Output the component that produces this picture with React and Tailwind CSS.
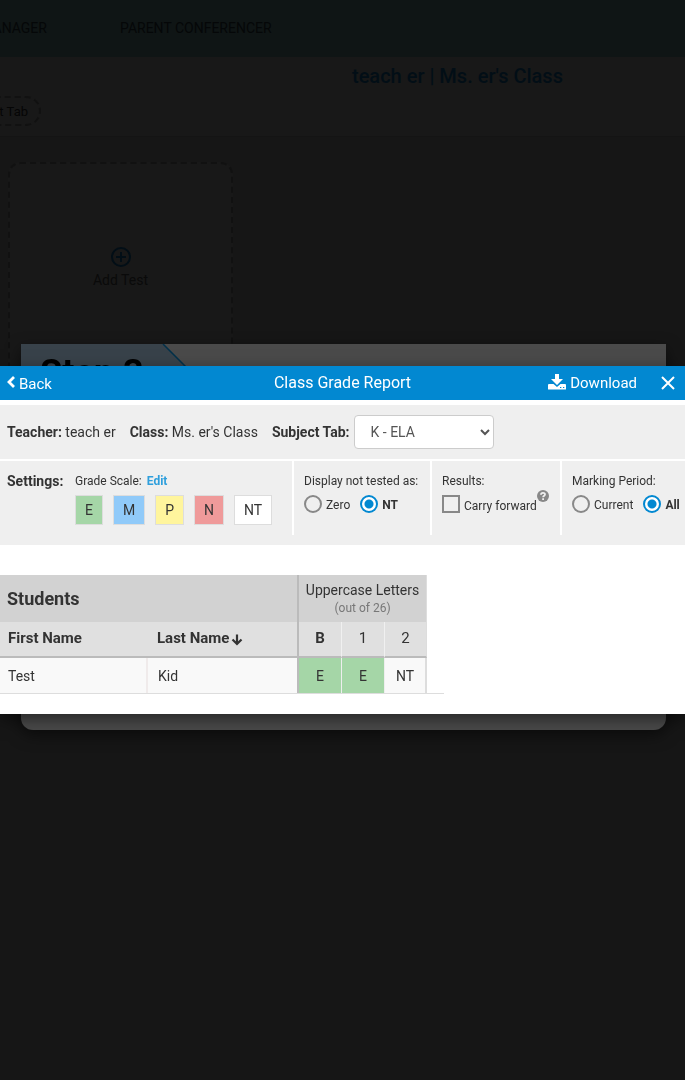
import React from "react";

const grades = [
  ["E", "bg-[#a5d6a7]"],
  ["M", "bg-[#90caf9]"],
  ["P", "bg-[#fff59d]"],
  ["N", "bg-[#ef9a9a]"],
  ["NT", "bg-white"],
];

function Radio({ name, label, checked }) {
  return (
    <label className="flex items-center gap-1">
      <input
        type="radio"
        name={name}
        defaultChecked={checked}
        className="peer size-[18px] shrink-0 appearance-none rounded-full border-2 border-[#888] bg-[#efefef] checked:border-[#0288d1] checked:bg-[radial-gradient(circle,#0288d1_4px,#fff_5px)]"
      />
      <span className="pt-0.5 peer-checked:font-bold">{label}</span>
    </label>
  );
}

function Backdrop() {
  return (
    <div className="min-h-screen bg-[#161616]">
      <nav className="h-[57px] overflow-hidden bg-[#0f1515] pt-[18px] text-sm leading-5 text-[#050708]">
        <div className="-ml-[56px] flex gap-[77px] whitespace-nowrap">
          <a href="#manager" className="w-[99px] text-right">TEST MANAGER</a>
          <a href="#conferencer">PARENT CONFERENCER</a>
        </div>
      </nav>
      <header className="h-20 overflow-hidden border-b border-[#141414] bg-[#181818] pt-[7px]">
        <h1 className="ml-[352px] text-xl leading-6 font-medium whitespace-nowrap text-[#020e16]">
          teach er | Ms. er's Class
        </h1>
        <button className="-ml-[100px] mt-2 flex h-[30px] w-[141px] items-center justify-end rounded-full border-2 border-dashed border-[#111] pt-0.5 pr-[11px] text-[13px] text-[#050505]">
          Add Subject Tab
        </button>
      </header>
      <main className="px-2 pt-[25px]">
        <button className="flex h-[236px] w-[225px] flex-col items-center justify-center gap-0.5 rounded-xl border-2 border-dashed border-[#111] bg-[#181818] pb-7 text-sm text-[#0a0a0a]">
          <svg width="22" height="22" viewBox="0 0 22 22" fill="none" stroke="#020e16" strokeWidth="2" className="mt-1">
            <circle cx="11" cy="11" r="9" />
            <path d="M11 6v10M6 11h10" />
          </svg>
          Add Test
        </button>
      </main>
    </div>
  );
}

function StepDialog() {
  return (
    <div className="fixed inset-0 flex items-center pr-[19px] pb-[6px] pl-[21px]">
      <section className="h-[386px] grow overflow-hidden rounded-b-xl bg-[#4a4a4a] shadow-[0_5px_15px_rgba(0,0,0,0.5)]">
        <div className="relative">
          <svg width="205" height="40" viewBox="0 0 205 40" className="block">
            <path d="M0 0H142L182 40H0Z" fill="#38424a" />
            <path d="M142 0L182 40" stroke="#02304a" strokeWidth="1.5" />
          </svg>
          <h2 className="absolute top-[9px] left-[19px] text-4xl font-bold text-black">Step 3</h2>
        </div>
      </section>
    </div>
  );
}

function TitleBar() {
  return (
    <header className="grid h-[34px] grid-cols-[1fr_auto_1fr] items-center bg-[#0288d1] text-white">
      <button className="flex items-center gap-1 pt-0.5 pl-[7px] text-[15px]">
        <svg width="8" height="12" viewBox="0 0 8 12" fill="none" stroke="currentColor" strokeWidth="2.8" className="mb-1">
          <path d="M7 1L2 6L7 11" />
        </svg>
        Back
      </button>
      <h2 className="text-base">Class Grade Report</h2>
      <div className="flex items-center justify-end gap-5 pr-[6px]">
        <button className="flex items-center gap-1 text-[15px]">
          <svg width="18" height="16" viewBox="0 0 18 16" className="mb-0.5" fill="currentColor">
            <path d="M7 0h4v5h4L9 11L3 5h4Z" />
            <path fillRule="evenodd" d="M1 10h4.500l3.500 3l3.500-3H17q1 0 1 1v4q0 .5-.5.5H.5Q0 15.500 0 15v-4q0-1 1-1ZM12 13v1h1.300v-1ZM15 13v1h1.300v-1Z" />
          </svg>
          Download
        </button>
        <button aria-label="Close" className="p-1">
          <svg width="14" height="14" viewBox="0 0 14 14" fill="none" stroke="currentColor" strokeWidth="2">
            <path d="M1 1L13 13M13 1L1 13" />
          </svg>
        </button>
      </div>
    </header>
  );
}

function Settings() {
  return (
    <div className="mt-0.5 flex h-[84px] bg-[#efefef] pb-[10px] text-xs whitespace-nowrap">
      <h3 className="w-[75px] shrink-0 pt-[10px] pl-[7px] text-sm leading-5 font-bold">Settings:</h3>
      <div className="w-[217px] shrink-0 pt-3">
        <p className="leading-4">
          Grade Scale: <a href="#edit" className="ml-0.5 font-bold text-[#2f9fdc]">Edit</a>
        </p>
        <ul className="mt-[6px] flex gap-[10px] text-sm">
          {grades.map(([g, color]) => (
            <li key={g} className={`flex h-[30px] items-center border border-[#ddd] px-[9px] ${color}`}>{g}</li>
          ))}
        </ul>
      </div>
      <fieldset className="w-[138px] shrink-0 border-l-2 border-white pt-3 pl-[10px]">
        <p className="leading-4">Display not tested as:</p>
        <div className="mt-[6px] flex gap-[10px]">
          <Radio name="untested" label="Zero" />
          <Radio name="untested" label="NT" checked />
        </div>
      </fieldset>
      <fieldset className="w-[130px] shrink-0 border-l-2 border-white pt-3 pl-[10px]">
        <p className="leading-4">Results:</p>
        <div className="mt-[5px] flex items-start">
          <label className="flex items-center gap-1">
            <input type="checkbox" className="size-[18px] shrink-0 appearance-none border-2 border-[#888]" />
            <span className="pt-1">Carry forward</span>
          </label>
          <button aria-label="Help" className="-mt-1 flex size-3 items-center justify-center rounded-full bg-[#888]">
            <svg width="12" height="12" viewBox="0 0 12 12" fill="none" stroke="#efefef" strokeWidth="1.8">
              <path d="M4 4.700C4 2.200 8 2.200 8 4.500C8 5.800 6.100 5.700 6.100 7.300M6.100 8.200V9.900" />
            </svg>
          </button>
        </div>
      </fieldset>
      <fieldset className="grow border-l-2 border-white pt-3 pl-[10px]">
        <p className="leading-4">Marking Period:</p>
        <div className="mt-[6px] flex gap-[10px]">
          <Radio name="period" label="Current" />
          <Radio name="period" label="All" checked />
        </div>
      </fieldset>
    </div>
  );
}

function StudentTable() {
  return (
    <div className="mt-[30px] mb-5 w-[444px]">
      <table className="w-[427px] table-fixed border-separate border-spacing-0 text-sm">
        <colgroup>
          <col className="w-[148px]" />
          <col className="w-[149px]" />
          <col className="w-[44px]" />
          <col className="w-[43px]" />
          <col className="w-[43px]" />
        </colgroup>
        <thead>
          <tr className="h-[47px] bg-[#d2d2d2]">
            <th colSpan={2} className="pl-[7px] text-left text-lg">Students</th>
            <th colSpan={3} className="border-r border-l-2 border-r-[#ddd] border-l-[#bbb] font-normal leading-[18px] whitespace-nowrap">
              Uppercase Letters
              <span className="block text-xs leading-[18px] text-[#777]">(out of 26)</span>
            </th>
          </tr>
          <tr className="h-9 bg-[#e0e0e0] text-[15px] *:border-b-2 *:border-b-[#bbb]">
            <th className="pl-2 text-left">First Name</th>
            <th className="pl-[9px] text-left">
              <span className="flex items-center gap-0.5">
                Last Name
                <svg width="12" height="12" viewBox="0 0 12 12" fill="none" stroke="currentColor" strokeWidth="2.2" className="mt-0.5">
                  <path d="M6 0.500V10M1.500 5.500L6 10L10.500 5.500" />
                </svg>
              </span>
            </th>
            <th className="border-l-2 border-l-[#bbb]">B</th>
            <th className="border-l border-l-[#f0f0f0] font-normal">1</th>
            <th className="border-r border-l border-r-[#ddd] border-l-[#f0f0f0] font-normal">2</th>
          </tr>
        </thead>
        <tbody>
          <tr className="h-[35px] bg-[#f9f9f9]">
            <td className="border-r-2 border-r-[#f0ebeb] pl-2">Test</td>
            <td className="pl-[10px]">Kid</td>
            <td className="border-l-2 border-l-[#bbb] bg-[#a5d6a7] text-center">E</td>
            <td className="border-l border-l-[#eee] bg-[#a5d6a7] text-center">E</td>
            <td className="border-r-2 border-l border-r-[#ddd] border-l-[#eee] text-center">NT</td>
          </tr>
        </tbody>
      </table>
      <div className="h-px bg-[#ddd]" />
    </div>
  );
}

export default function App() {
  return (
    <div className="font-[Roboto,sans-serif] text-[#333]">
      <Backdrop />
      <StepDialog />
      <div className="fixed inset-0 flex items-center">
        <section role="dialog" aria-label="Class Grade Report" className="w-full overflow-hidden bg-white shadow-[0_5px_15px_rgba(0,0,0,0.5)]">
          <TitleBar />
          <div className="mt-[5px] flex h-[54px] items-center gap-[14px] bg-[#efefef] pl-[7px] text-sm">
            <p><b>Teacher:</b> teach er</p>
            <p><b>Class:</b> Ms. er's Class</p>
            <div className="flex items-center gap-1">
              <label htmlFor="subject" className="font-bold">Subject Tab:</label>
              <select id="subject" className="h-[34px] w-[140px] rounded border border-[#ccc] bg-white px-3 text-sm text-[#555]">
                <option>K - ELA</option>
              </select>
            </div>
          </div>
          <Settings />
          <StudentTable />
        </section>
      </div>
    </div>
  );
}
